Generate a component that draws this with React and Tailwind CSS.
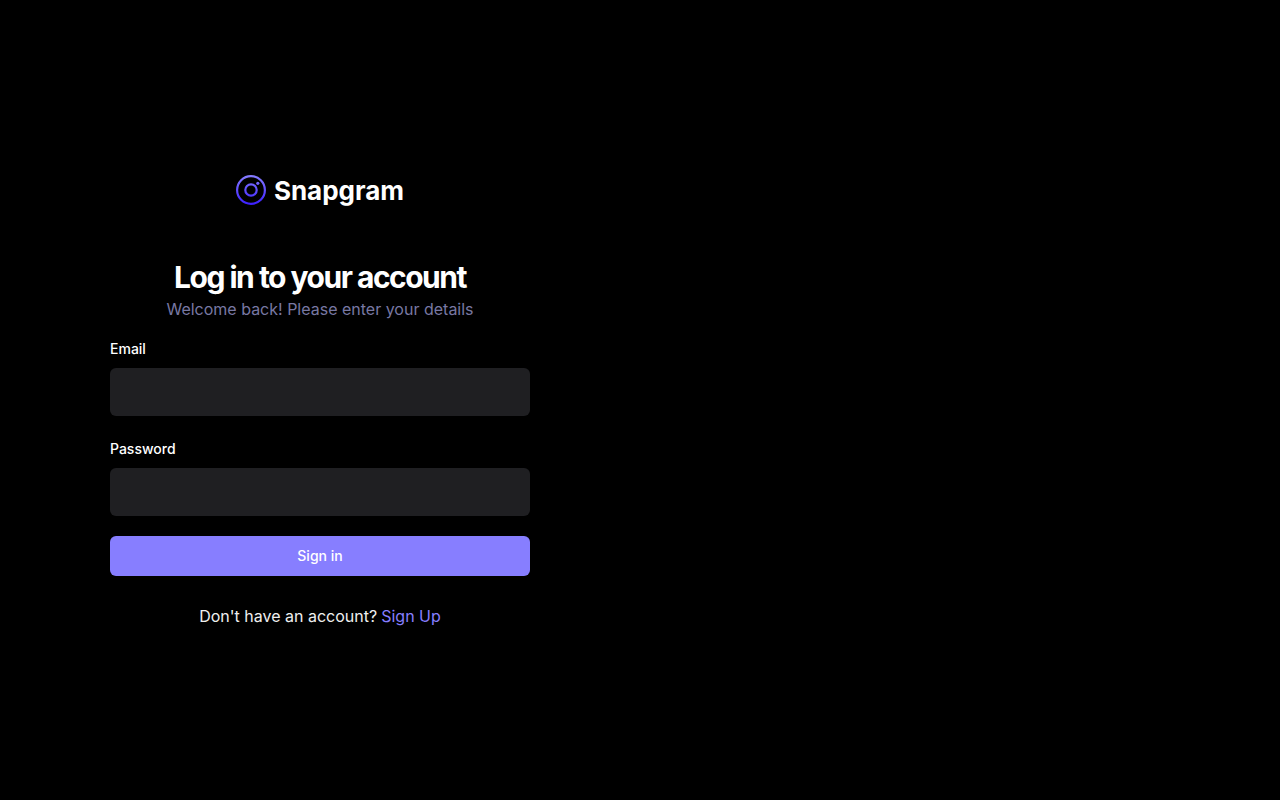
import React from "react";

function Logo() {
  return (
    <div className="flex h-9 items-center gap-2">
      <svg width="30" height="30" viewBox="0 0 30 30" fill="none" aria-hidden="true">
        <defs>
          <linearGradient id="ring" x1="15" y1="0" x2="15" y2="30" gradientUnits="userSpaceOnUse">
            <stop stopColor="#877EFF" />
            <stop offset="1" stopColor="#3A1DFF" />
          </linearGradient>
        </defs>
        <circle cx="15" cy="15" r="13.9" stroke="url(#ring)" strokeWidth="2.2" />
        <circle cx="15" cy="15" r="5.7" stroke="url(#ring)" strokeWidth="2.2" />
        <circle cx="21.8" cy="8.3" r="1.6" fill="url(#ring)" />
      </svg>
      <span className="pt-0.5 text-[26px] leading-8 font-bold">Snapgram</span>
    </div>
  );
}

function Field({ id, label, type }) {
  return (
    <div className="flex flex-col gap-2">
      <div>
        <label htmlFor={id} className="text-sm leading-none font-medium">
          {label}
        </label>
      </div>
      <input
        id={id}
        name={id}
        type={type}
        className="h-12 w-full rounded-md bg-[#1f1f22] px-3 text-sm outline-none focus-visible:ring-1 focus-visible:ring-[#877eff]"
      />
    </div>
  );
}

export default function App() {
  return (
    <main className="grid min-h-screen bg-black font-['Inter',sans-serif] text-white lg:grid-cols-2">
      <section className="flex flex-col items-center justify-center px-4 py-10">
        <div className="flex w-full max-w-[420px] flex-col items-center">
          <Logo />
          <h1 className="pt-12 text-center text-3xl leading-[42px] font-bold tracking-tighter">
            Log in to your account
          </h1>
          <p className="text-center text-base leading-[22px] text-[#7878a3]">
            Welcome back! Please enter your details
          </p>
          <form className="mt-4 flex w-full flex-col gap-5" onSubmit={(e) => e.preventDefault()}>
            <Field id="email" label="Email" type="email" />
            <Field id="password" label="Password" type="password" />
            <button type="submit" className="h-10 rounded-md bg-[#877eff] text-sm font-medium">
              Sign in
            </button>
            <p className="mt-2 text-center text-base text-[#efefef]">
              Don't have an account?
              <a href="#sign-up" className="ml-1 text-[#877eff]">
                Sign Up
              </a>
            </p>
          </form>
        </div>
      </section>
      <aside className="hidden bg-black lg:block" />
    </main>
  );
}
